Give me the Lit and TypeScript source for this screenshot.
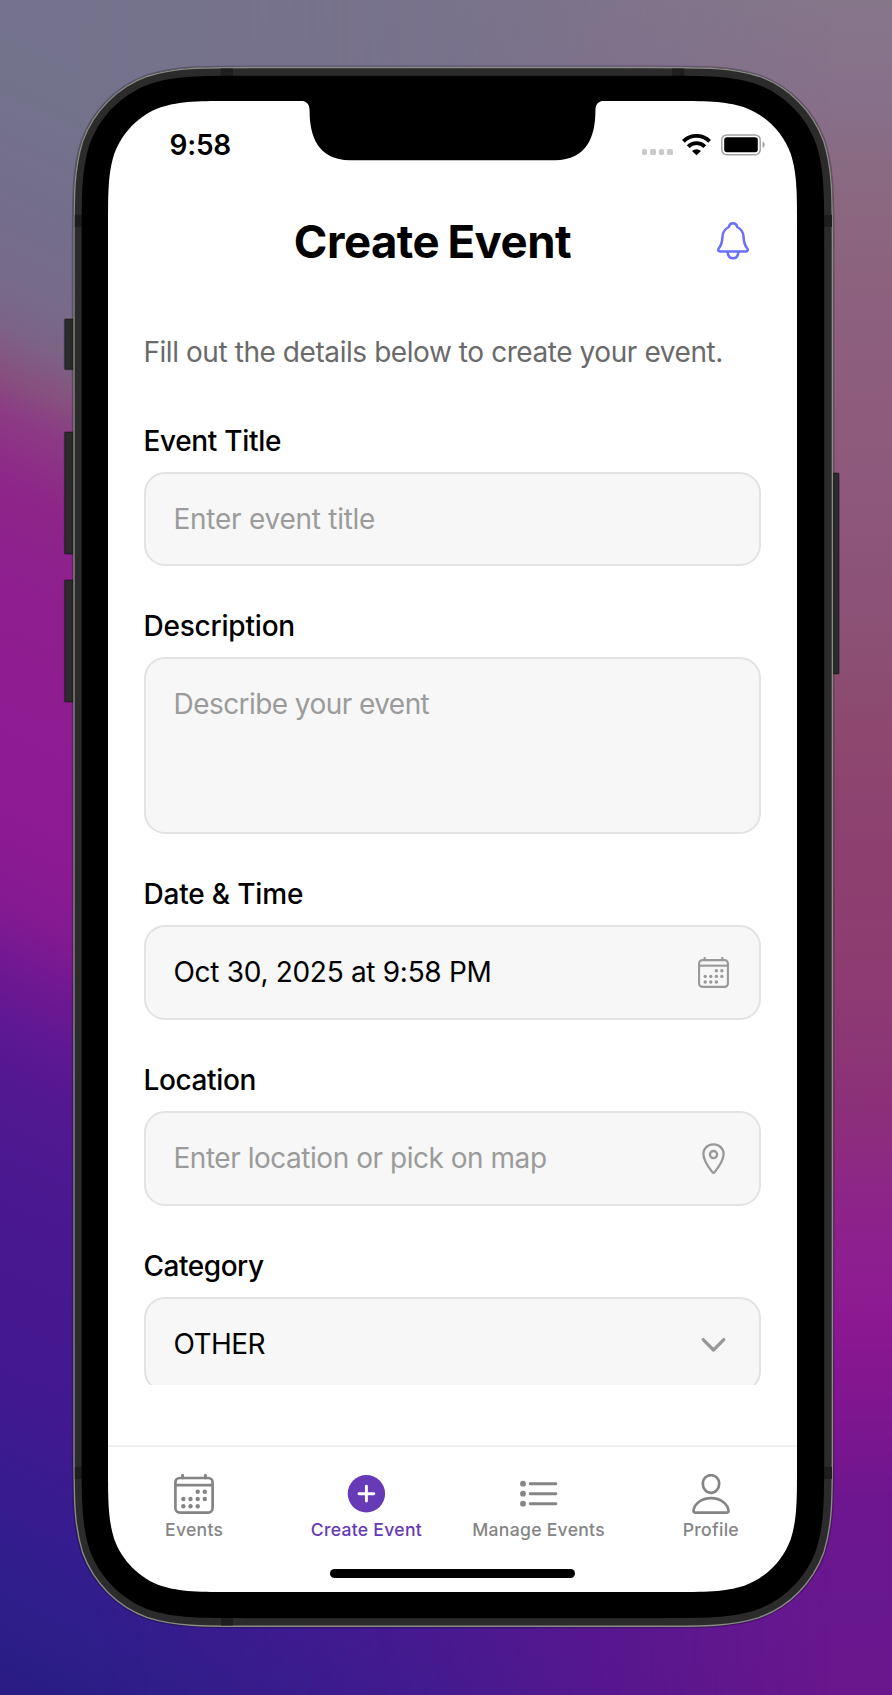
import { LitElement, html, svg, css, nothing, TemplateResult } from "lit";
import { customElement, property } from "lit/decorators.js";

/** Rounded rectangle with continuous (superelliptic) corners. */
function squircle(x: number, y: number, w: number, h: number, r: number): string {
  const a = 1.52866 * r, b = 1.08849 * r, c = 0.86841 * r, d = 0.63149 * r;
  const e = 0.07491 * r, f = 0.37282 * r, g = 0.16906 * r;
  const X = x + w, Y = y + h;
  return [
    `M${x + a} ${y}H${X - a}`,
    `C${X - b} ${y} ${X - c} ${y} ${X - d} ${y + e}`,
    `C${X - f} ${y + g} ${X - g} ${y + f} ${X - e} ${y + d}`,
    `C${X} ${y + c} ${X} ${y + b} ${X} ${y + a}V${Y - a}`,
    `C${X} ${Y - b} ${X} ${Y - c} ${X - e} ${Y - d}`,
    `C${X - g} ${Y - f} ${X - f} ${Y - g} ${X - d} ${Y - e}`,
    `C${X - c} ${Y} ${X - b} ${Y} ${X - a} ${Y}H${x + a}`,
    `C${x + b} ${Y} ${x + c} ${Y} ${x + d} ${Y - e}`,
    `C${x + f} ${Y - g} ${x + g} ${Y - f} ${x + e} ${Y - d}`,
    `C${x} ${Y - c} ${x} ${Y - b} ${x} ${Y - a}V${y + a}`,
    `C${x} ${y + b} ${x} ${y + c} ${x + e} ${y + d}`,
    `C${x + g} ${y + f} ${x + f} ${y + g} ${x + d} ${y + e}`,
    `C${x + c} ${y} ${x + b} ${y} ${x + a} ${y}Z`,
  ].join("");
}

const calendarDots: [number, number][] = [
  [23.7, 17.8], [30.8, 17.8],
  [9.3, 25], [16.5, 25], [23.7, 25], [30.8, 25],
  [9.3, 32.2], [16.5, 32.2], [23.7, 32.2],
];

const icons: Record<string, TemplateResult> = {
  calendar: html`<svg viewBox="0 0 40 40" fill="none" stroke="currentColor" stroke-width="2.7">
    <rect x="1.4" y="4" width="37.2" height="34.6" rx="4.4"></rect>
    <path d="M1.4 11.2H38.6"></path>
    <path d="M8.6 4V1.3M31.4 4V1.3" stroke-width="2.9" stroke-linecap="round"></path>
    ${calendarDots.map(([x, y]) => svg`<circle cx=${x} cy=${y} r="2.2" fill="currentColor" stroke="none"></circle>`)}
  </svg>`,
  plus: html`<svg viewBox="0 0 40 40">
    <circle cx="20.4" cy="19.7" r="18.7" fill="currentColor"></circle>
    <path d="M20.4 12.3V27.1M13 19.7H27.8" stroke="#fff" stroke-width="2.9" stroke-linecap="round"></path>
  </svg>`,
  list: html`<svg viewBox="0 0 40 40" fill="currentColor">
    <circle cx="4" cy="9.7" r="2.9"></circle><circle cx="4" cy="19.7" r="2.9"></circle><circle cx="4" cy="29.7" r="2.9"></circle>
    <path d="M11.2 9.7H36.9M11.2 19.7H36.9M11.2 29.7H36.9" stroke="currentColor" stroke-width="2.9" stroke-linecap="round"></path>
  </svg>`,
  person: html`<svg viewBox="0 0 40 40" fill="none" stroke="currentColor" stroke-width="2.7" stroke-linejoin="round">
    <path d="M20 1.2C24.8 1.2 28.2 5 28.2 9.6C28.2 14.8 24.6 18.9 20 18.9S11.8 14.8 11.8 9.6C11.8 5 15.2 1.2 20 1.2Z"></path>
    <path d="M4.6 38.6C3.2 38.6 2.5 38.1 2.5 36.9C2.9 30.6 9.6 24.2 20 24.2S37.1 30.6 37.5 36.9C37.5 38.1 36.8 38.6 35.4 38.6Z"></path>
  </svg>`,
  pin: html`<svg viewBox="0 0 31 31" fill="none" stroke="currentColor" stroke-width="2.3" stroke-linejoin="round">
    <path d="M15.5 1.3C21.3 1.3 25.6 5.4 25.6 11C25.6 17.6 20.4 24.4 16.7 29.1Q15.5 30.4 14.3 29.1C10.6 24.4 5.4 17.6 5.4 11C5.4 5.4 9.7 1.3 15.5 1.3Z"></path>
    <circle cx="15.5" cy="11.6" r="3.6"></circle>
  </svg>`,
  chevron: html`<svg viewBox="0 0 31 31" fill="none" stroke="currentColor" stroke-width="3.3" stroke-linecap="round" stroke-linejoin="round">
    <path d="M5.2 10.6L15.5 21L25.8 10.6"></path>
  </svg>`,
  bell: html`<svg viewBox="0 0 32 38" fill="none" stroke="currentColor" stroke-width="2.5" stroke-linejoin="round">
    <path d="M16 1.3C13.7 1.3 12.2 2.6 11.8 5C8 7 5.7 10.4 5.5 14.4C5.3 19.6 5 22.4 1.9 26.3C0.5 28.2 1.2 29.4 3.2 29.4H28.8C30.8 29.4 31.5 28.2 30.1 26.3C27 22.4 26.7 19.6 26.5 14.4C26.3 10.4 24 7 20.2 5C19.8 2.6 18.3 1.3 16 1.3Z"></path>
    <path d="M10.6 29.8C10.8 33.6 12.8 36.3 16 36.3S21.2 33.6 21.4 29.8"></path>
  </svg>`,
  wifi: html`<svg viewBox="0 0 29 22" fill="none" stroke="#000">
    <path d="M1.4 7.3A18.6 18.6 0 0 1 27.6 7.3" stroke-width="3.9"></path>
    <path d="M6.2 12.6A11.6 11.6 0 0 1 22.8 12.6" stroke-width="3.9"></path>
    <path d="M14.5 21.3L10 17A6.4 6.4 0 0 1 19 17Z" fill="#000" stroke="none"></path>
  </svg>`,
  battery: html`<svg viewBox="0 0 45 22">
    <rect x=".8" y=".9" width="38.4" height="19.8" rx="5" fill="none" stroke="#a3a3a3" stroke-width="1.5"></rect>
    <rect x="3.2" y="3.3" width="33.6" height="15" rx="2.8"></rect>
    <path d="M41.6 7.6C44.4 8.6 44.4 13 41.6 14Z" fill="#a3a3a3"></path>
  </svg>`,
};

interface Field {
  label: string;
  labelTracking: number;
  text: string;
  tracking: number;
  height: number;
  filled?: boolean;
  tall?: boolean;
  icon?: string;
}

@customElement("form-field")
export class FormField extends LitElement {
  @property({ attribute: false }) field!: Field;

  static styles = css`
    :host { display: flex; flex-direction: column; gap: 14px; }
    .label { font-weight: 500; line-height: 34px; color: #000; margin-left: -0.6px; }
    .box {
      box-sizing: border-box; display: flex; align-items: center;
      justify-content: space-between; padding: 0 30px 0 27.5px;
      border: 2px solid #e3e3e3; border-radius: 21px; background: #f7f7f7; color: #9b9b9b;
    }
    .tall { align-items: flex-start; padding-top: 28px; }
    .text { line-height: 34px; white-space: nowrap; }
    .filled { color: #000; }
    .icon { width: 31px; height: 31px; color: #999; }
    .icon svg { display: block; width: 100%; height: 100%; }
  `;

  render() {
    const f = this.field;
    return html`
      <div class="label" style="letter-spacing:${f.labelTracking}px">${f.label}</div>
      <div class="box ${f.tall ? "tall" : ""}" style="height:${f.height}px">
        <span class="text ${f.filled ? "filled" : ""}" style="letter-spacing:${f.tracking}px">${f.text}</span>
        ${f.icon ? html`<span class="icon">${icons[f.icon]}</span>` : nothing}
      </div>`;
  }
}

@customElement("app-root")
export class AppRoot extends LitElement {
  private fields: Field[] = [
    { label: "Event Title", labelTracking: -0.32, text: "Enter event title", tracking: -0.26, height: 94 },
    { label: "Description", labelTracking: -0.2, text: "Describe your event", tracking: -0.56, height: 176.5, tall: true },
    { label: "Date & Time", labelTracking: -0.17, text: "Oct 30, 2025 at 9:58 PM", tracking: -0.3, height: 95, filled: true, icon: "calendar" },
    { label: "Location", labelTracking: -0.35, text: "Enter location or pick on map", tracking: -0.47, height: 95, icon: "pin" },
    { label: "Category", labelTracking: -0.45, text: "OTHER", tracking: -0.6, height: 95, filled: true, icon: "chevron" },
  ];

  private tabs = [
    { label: "Events", icon: "calendar" },
    { label: "Create Event", icon: "plus", active: true },
    { label: "Manage Events", icon: "list" },
    { label: "Profile", icon: "person" },
  ];

  static styles = css`
    :host {
      display: block; position: relative; box-sizing: border-box;
      width: 892px; height: 1695px; padding: 101px 95px 103px 108px; overflow: hidden;
      font-family: Inter, "Liberation Sans", sans-serif; font-size: 28px;
      background: linear-gradient(180deg,
        #86768a 0, #87708a 100px, #8b6780 200px, #8d5f7e 330px, #8d5a7c 450px, #8d557a 550px,
        #8c4f74 650px, #8d476f 750px, #8d4070 850px, #8e3d70 950px, #8c3676 1050px, #8c2e7a 1120px,
        #8d2488 1200px, #8d1f90 1260px, #8c1891 1320px, #80168f 1400px, #6e168f 1500px, #68188f 1600px, #68168c 1695px);
    }
    .wash, .frame { position: absolute; inset: 0; width: 892px; height: 1695px; }
    .wash {
      background: linear-gradient(205deg,
        #74728c 361px, #73728b 452px, #746e8d 542px, #776a8b 633px, #7c6487 669px, #87507f 714px,
        #8c3a84 751px, #8e2589 814px, #8f1f90 905px, #8f1b92 1041px, #8c1a92 1131px, #841a92 1195px,
        #701892 1249px, #5e1892 1303px, #521892 1358px, #4a1890 1448px, #421890 1629px, #371c90 1730px,
        #2d1e8a 1830px, #2a1c84 1897px);
      -webkit-mask-image: linear-gradient(90deg, #000 80px, rgba(0, 0, 0, .75) 450px, transparent 830px);
      mask-image: linear-gradient(90deg, #000 80px, rgba(0, 0, 0, .75) 450px, transparent 830px);
    }
    .screen { position: relative; height: 1491px; display: flex; flex-direction: column; }
    .status {
      height: 83px; box-sizing: border-box; display: flex; justify-content: space-between;
      padding: 27px 31px 0 61.5px;
    }
    .clock { font-weight: 600; line-height: 34px; letter-spacing: -0.2px; }
    .signals { display: flex; align-items: flex-start; padding-top: 6px; }
    .dots { display: flex; gap: 2.9px; padding-top: 15.3px; }
    .dots i { width: 5.5px; height: 5.5px; border-radius: 1.6px; background: #cacaca; }
    .wifi { width: 29px; height: 22px; margin-left: 9.5px; }
    .battery { width: 45px; height: 22px; margin-left: 10px; }
    svg { display: block; }
    .header { height: 116px; display: flex; align-items: center; padding: 0 48.5px 0 40.5px; }
    .title {
      flex: 1; margin: 0; text-align: center; font-size: 45.5px; line-height: 56px; font-weight: 700;
      letter-spacing: -0.5px; word-spacing: -2px;
    }
    .bell { width: 32px; height: 38px; color: #6a70fb; margin-top: -3px; }
    .form { height: 1085px; box-sizing: border-box; overflow: hidden; padding: 35px 36px 0; }
    .intro { margin: 0 0 55px -0.6px; line-height: 34px; color: #6a6a6a; letter-spacing: -0.43px; white-space: nowrap; }
    .fields { display: flex; flex-direction: column; gap: 43px; }
    .tabs {
      margin-top: 60px; border-top: 2px solid #efefef; padding-top: 27px;
      display: grid; grid-template-columns: repeat(4, 1fr); color: #858585;
    }
    .tab { display: flex; flex-direction: column; align-items: center; }
    .tab svg { width: 40px; height: 40px; }
    .tab span { font-size: 17.6px; font-weight: 500; line-height: 22px; letter-spacing: 0.27px; margin-top: 5px; white-space: nowrap; }
    .active { color: #673ab7; }
    .home { width: 245.5px; height: 9px; border-radius: 5px; background: #000; margin: auto auto 14.3px; }
  `;

  private renderFrame() {
    return html`<svg class="frame" viewBox="0 0 892 1695">
      <g fill="#2b2b2b" stroke="#000" stroke-opacity=".3" stroke-width="1.6">
        <rect x="64.6" y="319" width="12" height="50.5" rx="1"></rect>
        <rect x="64.6" y="432" width="12" height="122" rx="1"></rect>
        <rect x="64.6" y="580" width="12" height="122" rx="1"></rect>
        <rect x="828" y="473" width="11" height="201" rx="1"></rect>
      </g>
      <path d=${squircle(73.3, 66.9, 759.7, 1560, 117)} fill="#2b2b2b" stroke="#000" stroke-opacity=".24" stroke-width="3"></path>
      <path d=${squircle(74, 67.5, 758.4, 1558.8, 116.3)} fill="#2b2b2b" stroke="#8a8a86" stroke-width="1.4"></path>
      <path d="M220.7 68.4h12.3v9h-12.3zM672 68.4h12.3v9h-12.3zM221 1616.6h12v9h-12zM74.8 214.7h8v12.3h-8zM824 214.7h8v12.3h-8zM74.8 1467h8v12h-8zM824 1467h8v12h-8z" fill="#1e1e1e"></path>
      <path d=${squircle(81.6, 75.8, 742.6, 1542.4, 108)} fill="#000"></path>
      <path d=${squircle(108, 101, 689, 1491, 83.6)} fill="#fff"></path>
      <path d="M299 100.5C307 101 309.6 104 309.6 111C309.6 136 318 160.2 350 160.2H555C587 160.2 595.4 136 595.4 111C595.4 104 598 101 606 100.5Z"></path>
    </svg>`;
  }

  render() {
    return html`
      <div class="wash"></div>
      ${this.renderFrame()}
      <main class="screen">
        <div class="status">
          <div class="clock">9:58</div>
          <div class="signals">
            <div class="dots"><i></i><i></i><i></i><i></i></div>
            <div class="wifi">${icons.wifi}</div>
            <div class="battery">${icons.battery}</div>
          </div>
        </div>
        <header class="header">
          <h1 class="title">Create Event</h1>
          <div class="bell">${icons.bell}</div>
        </header>
        <section class="form">
          <p class="intro">Fill out the details below to create your event.</p>
          <div class="fields">${this.fields.map((f) => html`<form-field .field=${f}></form-field>`)}</div>
        </section>
        <nav class="tabs">
          ${this.tabs.map((t) => html`<div class="tab ${t.active ? "active" : ""}">${icons[t.icon]}<span>${t.label}</span></div>`)}
        </nav>
        <div class="home"></div>
      </main>`;
  }
}
